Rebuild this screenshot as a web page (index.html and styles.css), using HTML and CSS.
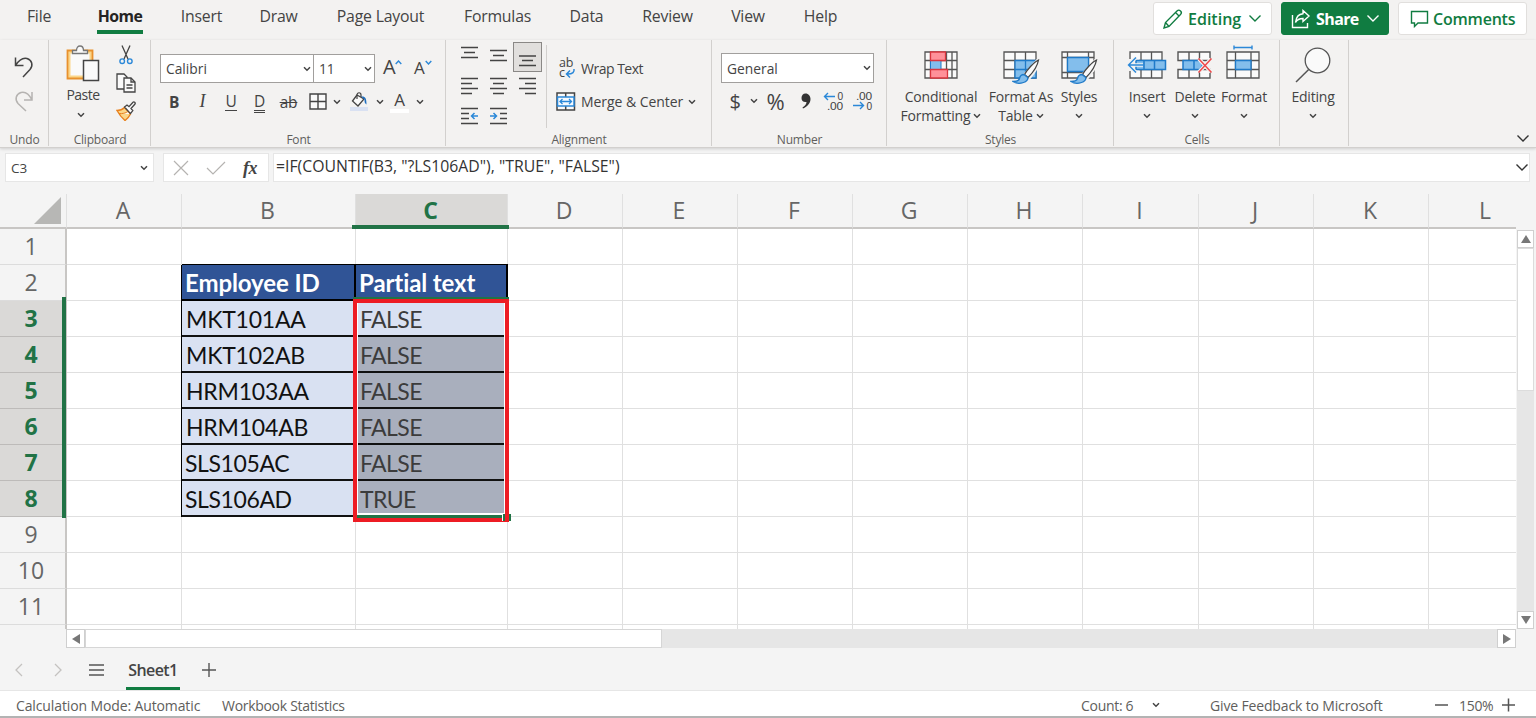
FILE: index.html
```html
<!DOCTYPE html>
<html lang="en">
<head>
<meta charset="utf-8">
<title>Workbook</title>
<link rel="stylesheet" href="styles.css">
</head>
<body>
<svg width="0" height="0" class="defs">
  <defs>
    <symbol id="chev" viewBox="0 0 8 6"><path d="M1 1.2 4 4.2 7 1.2" fill="none" stroke="#444" stroke-width="1.5"/></symbol>
    <symbol id="bigchev" viewBox="0 0 14 9"><path d="M1.5 1.5 7 7l5.500-5.500" fill="none" stroke="currentColor" stroke-width="1.4"/></symbol>
    <symbol id="brush" viewBox="0 0 28 25">
      <path d="M26.500 1 14 15l3.500 3C21 14 25.500 7 26.500 1z" fill="#fff" stroke="#f3f2f1" stroke-width="4"/>
      <path d="M26.500 1C22 3 15 11 12.500 15.500L16 18.500C20 14.500 25.500 7 26.500 1z" fill="#fafafa" stroke="#444" stroke-width="1.3"/>
      <path d="M12 15.500c-3 0-4 1.500-4.500 4C7 21.500 5 22.500 1 22.500c3 2 7.500 2 10.500 1 3-1 4.500-3 4.300-5z" fill="#83beec" stroke="#1f7ac8" stroke-width="1.3"/>
    </symbol>
  </defs>
</svg>
<div class="app">
  <header class="topbar">
    <nav class="tabs">
      <span class="tab w-file">File</span><span class="tab w-home active">Home</span><span class="tab w-insert">Insert</span><span class="tab w-draw">Draw</span><span class="tab w-layout">Page Layout</span><span class="tab w-formulas">Formulas</span><span class="tab w-data">Data</span><span class="tab w-review">Review</span><span class="tab w-view">View</span><span class="tab w-help">Help</span>
    </nav>
    <div class="actions">
      <div class="action a-edit">
        <svg width="20" height="20" viewBox="0 0 20 20" fill="none" stroke="#107c41" stroke-width="1.400"><path d="M1 19 2.500 13.500 14 2c1-1 2.500-1 3.500 0s1 2.500 0 3.500L6 17.500z M12.500 3.500l4 4 M2.500 13.500 6 17.500"/></svg>
        <span>Editing</span><svg width="14" height="9"><use href="#bigchev"/></svg>
      </div>
      <div class="action a-share">
        <svg width="20" height="20" viewBox="0 0 20 20" fill="none" stroke="#fff" stroke-width="1.400"><path d="M1.500 6v12.500h15V14M12 1.500l6 5.500-6 5.500V9.500C8.500 9.500 6 10.500 4.500 13.500 5 8.500 7.500 5 12 4.700z"/></svg>
        <span>Share</span><svg width="14" height="9"><use href="#bigchev"/></svg>
      </div>
      <div class="action a-comments">
        <svg width="19" height="18" viewBox="0 0 19 18" fill="none" stroke="#107c41" stroke-width="1.400"><path d="M1.500 1.500h16v11.500H8L4.500 16.500V13h-3z"/></svg>
        <span>Comments</span>
      </div>
    </div>
  </header>

  <div class="ribbon">
    <section class="group g-undo">
      <div class="content undo-col">
        <svg width="20" height="22" viewBox="0 0 20 22" fill="none" stroke="#444" stroke-width="1.500"><path d="M1.500 1.500v8h8M1.500 9.500C5 4 9 1.500 13 2.500c5 1.500 6.500 7 3 11L9 21"/></svg>
        <svg width="20" height="22" viewBox="0 0 20 22" fill="none" stroke="#b5b3b1" stroke-width="1.500"><path d="M18 2v8h-8M18 10C15 4 11 1.500 7 2.500c-5 1.500-6.500 7-3 11L12 21"/></svg>
      </div>
      <div class="label">Undo</div>
    </section>

    <section class="group g-clip">
      <div class="content clip">
        <div class="paste">
          <svg width="34" height="37" viewBox="0 0 34 37"><path d="M1.500 5.500h25v28h-25z" fill="#fbd689" stroke="#e8912d" stroke-width="1.800"/><path d="M4.500 8.500h19v22h-19z" fill="#fafafa"/><path d="M6.500 8.500V5.500h4C10.500 2.500 12 1 14 1s3.500 1.500 3.500 4.500h4v3z" fill="#fafafa" stroke="#777" stroke-width="1.300"/><path d="M17.500 15.500h15v20h-15z" fill="#fafafa" stroke="#444" stroke-width="1.500"/></svg>
          <span>Paste</span>
          <svg class="c" width="8" height="6"><use href="#chev"/></svg>
        </div>
        <div class="clip-tools">
          <svg width="14" height="20" viewBox="0 0 14 20" fill="none"><path d="M3 .5 9 14M11 .5 5 14" stroke="#444" stroke-width="1.300"/><circle cx="3.200" cy="16.200" r="2.300" stroke="#2b88d8" stroke-width="1.400"/><circle cx="10.800" cy="16.200" r="2.300" stroke="#2b88d8" stroke-width="1.400"/></svg>
          <svg width="20" height="20" viewBox="0 0 20 20" fill="#fafafa" stroke="#444" stroke-width="1.300"><path d="M1 1h7l3 3v12H1z"/><path d="M8 5h7l4 4v10H8z"/><path d="M15 5v4h4M10.500 12h6M10.500 15h6" fill="none"/></svg>
          <svg width="20" height="20" viewBox="0 0 20 20"><path d="M1 9.500C5 9.500 7 8 8.500 6.500l6 6.500C13 16 11.500 18 9 19.500 6 17 3.500 14 1 9.500z" fill="#fbd689" stroke="#e8801d" stroke-width="1.400"/><path d="M3 12.500c3 .5 7-.5 9-2l2 2.500" fill="#fff" stroke="#e8801d"/><path d="M8.500 6 11 4l2 1.700L17 1.200c1-1 2.800.5 2 1.800L15 7.600l1.800 2-2.300 3z" fill="#fafafa" stroke="#444" stroke-width="1.300"/></svg>
        </div>
      </div>
      <div class="label">Clipboard</div>
    </section>

    <section class="group g-font">
      <div class="content">
        <div class="font-top">
          <div class="select s-font"><span>Calibri</span><svg width="8" height="6"><use href="#chev"/></svg></div>
          <div class="select s-size"><span>11</span><svg width="8" height="6"><use href="#chev"/></svg></div>
          <span class="grow">A<svg width="7" height="5" viewBox="0 0 7 5"><path d="M.7 4 3.500 1 6.300 4" fill="none" stroke="#2b88d8" stroke-width="1.400"/></svg></span>
          <span class="shrink">A<svg width="7" height="5" viewBox="0 0 7 5"><path d="M.7 1 3.500 4 6.300 1" fill="none" stroke="#2b88d8" stroke-width="1.400"/></svg></span>
        </div>
        <div class="font-row">
          <b>B</b><i>I</i><span class="u">U</span><span class="dd">D</span><span class="st">ab</span>
          <svg width="18" height="17" viewBox="0 0 18 17" fill="#fafafa" stroke="#444" stroke-width="1.400"><path d="M1 1h16v15H1zM9 1v15M1 8.500h16"/></svg>
          <svg width="8" height="6"><use href="#chev"/></svg>
          <svg width="20" height="20" viewBox="0 0 20 20"><path d="M1 15h18v4H1z" fill="#d9e1f2"/><path d="M8 3 3.500 9 9 14l6-7z" fill="#fafafa" stroke="#444" stroke-width="1.300"/><path d="M8 7V3c0-3 4-3 4 0v2" fill="none" stroke="#444" stroke-width="1.200"/><path d="M12 4.500c4-.5 5.500 1 5.500 8-2-1-2-3-2-5z" fill="#1f6fc0"/></svg>
          <svg width="8" height="6"><use href="#chev"/></svg>
          <span class="fc">A</span>
          <svg width="8" height="6"><use href="#chev"/></svg>
        </div>
      </div>
      <div class="label">Font</div>
    </section>

    <section class="group g-align">
      <div class="content align">
        <div class="align-grid">
          <span><svg width="19" height="24" viewBox="0 0 19 24"><path d="M1 2.500h17M4 7.500h11M1 12.500h17"/></svg></span>
          <span><svg width="19" height="24" viewBox="0 0 19 24"><path d="M1 5.500h17M4 10.500h11M1 15.500h17"/></svg></span>
          <span class="on"><svg width="19" height="24" viewBox="0 0 19 24"><path d="M1 11h17M4 15.500h11M1 20.500h17"/></svg></span>
          <span><svg width="19" height="18" viewBox="0 0 19 18"><path d="M1 1.500h17M1 6.500h11M1 11.500h17M1 16.500h11"/></svg></span>
          <span><svg width="19" height="18" viewBox="0 0 19 18"><path d="M1 1.500h17M4 6.500h11M1 11.500h17M4 16.500h11"/></svg></span>
          <span><svg width="19" height="18" viewBox="0 0 19 18"><path d="M1 1.500h17M7 6.500h11M1 11.500h17M7 16.500h11"/></svg></span>
          <span><svg width="19" height="18" viewBox="0 0 19 18"><path d="M1 1.500h17M1 6.500h8M1 11.500h8M1 16.500h17"/><path class="blue" d="M18 9h-6M14.500 6 11.500 9l3 3"/></svg></span>
          <span><svg width="19" height="18" viewBox="0 0 19 18"><path d="M1 1.500h17M11 6.500h7M11 11.500h7M1 16.500h17"/><path class="blue" d="M1 9h6M4.500 6l3 3-3 3"/></svg></span>
        </div>
        <div class="align-text">
          <div class="line"><svg class="open" width="20" height="22" viewBox="0 0 20 22"><text x="3" y="9" class="wrapab">ab</text><text x="3" y="19" class="wrapab">c</text><path d="M18 11c.5 3-1 5-6.500 5M14 12.500 10.500 16l3.500 3.500" fill="none" stroke="#2b88d8" stroke-width="1.500"/></svg><span class="wt">Wrap Text</span></div>
          <div class="line"><svg width="20" height="19" viewBox="0 0 20 19"><path d="M1 1h17.500v17H1zM9.700 1v17" fill="#fafafa" stroke="#444" stroke-width="1.500"/><path d="M1.500 5h16.500v9H1.500z" fill="#f5faff" stroke="#2b88d8" stroke-width="1.500"/><path d="M4 9.500h11.500M6.500 7 4 9.500 6.500 12M13 7l2.500 2.500L13 12" fill="none" stroke="#2b88d8" stroke-width="1.300"/></svg><span class="mc">Merge &amp; Center</span><svg width="8" height="6"><use href="#chev"/></svg></div>
        </div>
      </div>
      <div class="label">Alignment</div>
    </section>

    <section class="group g-num">
      <div class="content">
        <div class="select s-num"><span>General</span><svg width="8" height="6"><use href="#chev"/></svg></div>
        <div class="num-row">
          <span class="cur">$</span><svg width="8" height="6"><use href="#chev"/></svg><span class="pct">%</span>
          <svg width="12" height="18" viewBox="0 0 12 18"><path d="M5.500 1.500C8.500 1.500 10.500 4 10.500 7c0 4-3 7.500-7.500 9.500l-.5-1C5 14 6.500 12 6.500 10 3.500 10.500 1.500 9 1.500 6c0-2.500 1.700-4.500 4-4.500z" fill="#333"/></svg>
          <svg class="open" width="22" height="22" viewBox="0 0 22 22"><text x="15.500" y="10" textLength="5.500" lengthAdjust="spacingAndGlyphs" class="dec">0</text><text x="5" y="19.500" textLength="16" lengthAdjust="spacingAndGlyphs" class="dec">.00</text><path d="M13 6.500H2.500M6 3 2.500 6.500 6 10" fill="none" stroke="#2b88d8" stroke-width="1.400"/></svg>
          <svg class="open" width="22" height="22" viewBox="0 0 22 22"><text x="5" y="10" textLength="16" lengthAdjust="spacingAndGlyphs" class="dec">.00</text><text x="15.500" y="19.500" textLength="5.500" lengthAdjust="spacingAndGlyphs" class="dec">0</text><path d="M2 15.500h10.500M9 12l3.500 3.500L9 19" fill="none" stroke="#2b88d8" stroke-width="1.400"/></svg>
        </div>
      </div>
      <div class="label">Number</div>
    </section>

    <section class="group g-styles">
      <div class="content bigs">
        <div class="big b-cf">
          <svg width="36" height="42" viewBox="0 0 36 42"><path d="M2 8h32v26H2zM2 16.500h32M2 25.500h32M7.500 8v26M29 8v26M23.500 8v26" fill="#fafafa" stroke="#555" stroke-width="1.300"/><path d="M7.500 16.500h10.500v9H7.500z" fill="#83beec" stroke="#1f7ac8"/><path d="M7.500 8h15v8.500h-15zM7.500 25.500h17V34h-17z" fill="#ff9199" stroke="#d9363e" stroke-width="1.300"/></svg>
          <span>Conditional</span><span class="two">Formatting<svg width="8" height="6"><use href="#chev"/></svg></span>
        </div>
        <div class="big b-ft">
          <svg width="40" height="42" viewBox="0 0 40 42"><path d="M3 8h32v26H3zM3 16.500h32M3 25.500h32M14 8v26M24.500 8v26" fill="#fafafa" stroke="#555" stroke-width="1.300"/><path d="M14 16.500h21V34H14zM24.500 16.500V34M14 25.500h21" fill="#83beec" stroke="#1f7ac8" stroke-width="1.300"/><use href="#brush" x="11" y="15" width="28" height="25"/></svg>
          <span>Format As</span><span class="two">Table<svg width="8" height="6"><use href="#chev"/></svg></span>
        </div>
        <div class="big b-st">
          <svg width="40" height="42" viewBox="0 0 40 42"><path d="M3 8h32v26H3zM3 13.500h32M3 28.500h32M8.500 8v26M29.500 8v26" fill="#fafafa" stroke="#555" stroke-width="1.300"/><path d="M8.500 13.500h21v14h-21z" fill="#83beec" stroke="#1f7ac8" stroke-width="1.300"/><use href="#brush" x="11" y="15" width="28" height="25"/></svg>
          <span>Styles</span><svg class="c" width="8" height="6"><use href="#chev"/></svg>
        </div>
      </div>
      <div class="label">Styles</div>
    </section>

    <section class="group g-cells">
      <div class="content bigs">
        <div class="big b-in">
          <svg width="42" height="42" viewBox="0 0 42 42"><path d="M4 8h32v26H4zM4 16.500h32M4 25.500h32M15 8v26M25.500 8v26" fill="#fafafa" stroke="#555" stroke-width="1.300"/><path d="M1 15h12v12H1z" fill="#f3f2f1"/><path d="M10 16.500h29.500v9H10z" fill="#83beec" stroke="#1f7ac8" stroke-width="1.500"/><path d="M18 16.500v9M28.500 16.500v9" stroke="#1f7ac8" stroke-width="1.500"/><path d="M17 21H3M10 13.500 2.500 21l7.500 7.500" fill="none" stroke="#f3f2f1" stroke-width="3.500"/><path d="M18 21H3M10 13.500 2.500 21l7.500 7.500" fill="none" stroke="#2b88d8" stroke-width="1.400"/></svg>
          <span>Insert</span><svg class="c" width="8" height="6"><use href="#chev"/></svg>
        </div>
        <div class="big b-de">
          <svg width="40" height="42" viewBox="0 0 40 42"><path d="M3 8h32v8.500H3zM3 25.500h32V34H3zM14 8v8.500M24.500 8v8.500M14 25.500V34M24.500 25.500V34" fill="#fafafa" stroke="#555" stroke-width="1.400"/><path d="M8 16.500h17l2.500 4.500-2.500 4.500H8zM19 16.500v9" fill="#83beec" stroke="#1f7ac8" stroke-width="1.500"/><path d="M24 15l12 13M36 15 24 28" stroke="#f3f2f1" stroke-width="4"/><path d="M23.500 14.500l13 14M36.500 14.500l-13 14" stroke="#f04a4a" stroke-width="1.500"/></svg>
          <span>Delete</span><svg class="c" width="8" height="6"><use href="#chev"/></svg>
        </div>
        <div class="big b-fo">
          <svg width="40" height="42" viewBox="0 0 40 42"><path d="M3 8h32v26H3zM3 16.500h32M3 25.500h32M11.500 8v26M27 8v26" fill="#fafafa" stroke="#555" stroke-width="1.300"/><path d="M11.500 16.500H27v9H11.500z" fill="#83beec" stroke="#1f7ac8" stroke-width="1.300"/><path d="M10 3.500h18M10 1.500v4M28 1.500v4" stroke="#2b88d8" stroke-width="1.400"/></svg>
          <span>Format</span><svg class="c" width="8" height="6"><use href="#chev"/></svg>
        </div>
      </div>
      <div class="label">Cells</div>
    </section>

    <section class="group g-edit">
      <div class="content bigs">
        <div class="big b-ed">
          <svg width="38" height="42" viewBox="0 0 38 42"><circle cx="23.500" cy="16.500" r="12.300" fill="#fafafa" stroke="#555" stroke-width="1.300"/><path d="M14.700 25.500 2 38" stroke="#555" stroke-width="1.500"/></svg>
          <span>Editing</span><svg class="c" width="8" height="6"><use href="#chev"/></svg>
        </div>
      </div>
    </section>
    <div class="collapse"><svg width="14" height="9"><use href="#bigchev"/></svg></div>
  </div>

  <div class="formula-bar">
    <div class="namebox"><span>C3</span><svg width="8" height="6"><use href="#chev"/></svg></div>
    <div class="fx-tools">
      <svg width="16" height="16" viewBox="0 0 16 16"><path d="M1 1l14 14M15 1 1 15" stroke="#b5b3b1" stroke-width="1.200"/></svg>
      <svg width="20" height="14" viewBox="0 0 20 14"><path d="M1 7l6 6L19 1" fill="none" stroke="#b5b3b1" stroke-width="1.200"/></svg>
      <span class="fx">fx</span>
    </div>
    <div class="formula"><span>=IF(COUNTIF(B3, "?LS106AD"), "TRUE", "FALSE")</span><svg width="14" height="9"><use href="#bigchev"/></svg></div>
  </div>

  <div class="workspace">
    <div class="sheet">
      <div class="row head"><span class="corner"><svg width="27" height="27" viewBox="0 0 27 27"><path d="M27 0v27H0z" fill="#b7b7b5"/></svg></span><span>A</span><span>B</span><span class="sel">C</span><span>D</span><span>E</span><span>F</span><span>G</span><span>H</span><span>I</span><span>J</span><span>K</span><span class="last">L</span></div>
      <div class="row"><span class="rh">1</span><i></i><i></i><i></i><i></i><i></i><i></i><i></i><i></i><i></i><i></i><i></i><i></i></div>
      <div class="row"><span class="rh">2</span><i></i><b class="th t1">Employee ID</b><b class="th t2">Partial text</b><i></i><i></i><i></i><i></i><i></i><i></i><i></i><i></i><i></i></div>
      <div class="row"><span class="rh sel">3</span><i></i><span class="id">MKT101AA</span><span class="val first">FALSE</span><i></i><i></i><i></i><i></i><i></i><i></i><i></i><i></i><i></i></div>
      <div class="row"><span class="rh sel">4</span><i></i><span class="id">MKT102AB</span><span class="val">FALSE</span><i></i><i></i><i></i><i></i><i></i><i></i><i></i><i></i><i></i></div>
      <div class="row"><span class="rh sel">5</span><i></i><span class="id">HRM103AA</span><span class="val">FALSE</span><i></i><i></i><i></i><i></i><i></i><i></i><i></i><i></i><i></i></div>
      <div class="row"><span class="rh sel">6</span><i></i><span class="id">HRM104AB</span><span class="val">FALSE</span><i></i><i></i><i></i><i></i><i></i><i></i><i></i><i></i><i></i></div>
      <div class="row"><span class="rh sel">7</span><i></i><span class="id sls">SLS105AC</span><span class="val">FALSE</span><i></i><i></i><i></i><i></i><i></i><i></i><i></i><i></i><i></i></div>
      <div class="row"><span class="rh sel">8</span><i></i><span class="id sls">SLS106AD</span><span class="val">TRUE</span><i></i><i></i><i></i><i></i><i></i><i></i><i></i><i></i><i></i></div>
      <div class="row"><span class="rh">9</span><i></i><i></i><i></i><i></i><i></i><i></i><i></i><i></i><i></i><i></i><i></i><i></i></div>
      <div class="row"><span class="rh">10</span><i></i><i></i><i></i><i></i><i></i><i></i><i></i><i></i><i></i><i></i><i></i><i></i></div>
      <div class="row"><span class="rh">11</span><i></i><i></i><i></i><i></i><i></i><i></i><i></i><i></i><i></i><i></i><i></i><i></i></div>
      <div class="row stub"><span class="rh"></span><i></i><i></i><i></i><i></i><i></i><i></i><i></i><i></i><i></i><i></i><i></i><i></i></div>
      <div class="colmark"></div>
      <div class="rowmark"></div>
      <div class="selection"></div>
      <div class="callout"></div>
      <div class="handle"></div>
    </div>
    <div class="vscroll">
      <div class="sbtn"><svg width="10" height="8" viewBox="0 0 10 8"><path d="M5 0l5 8H0z" fill="#777"/></svg></div>
      <div class="vthumb"></div>
      <div class="vtrack"></div>
      <div class="sbtn"><svg width="10" height="8" viewBox="0 0 10 8"><path d="M0 0h10L5 8z" fill="#777"/></svg></div>
    </div>
  </div>

  <div class="hscroll">
    <div class="sbtn"><svg width="8" height="10" viewBox="0 0 8 10"><path d="M8 0v10L0 5z" fill="#777"/></svg></div>
    <div class="hthumb"></div>
    <div class="htrack"></div>
    <div class="sbtn"><svg width="8" height="10" viewBox="0 0 8 10"><path d="M0 0l8 5-8 5z" fill="#777"/></svg></div>
  </div>

  <div class="sheetbar">
    <svg width="8" height="14" viewBox="0 0 8 14"><path d="M7 1 1 7l6 6" fill="none" stroke="#c4c2c0" stroke-width="1.300"/></svg>
    <svg width="8" height="14" viewBox="0 0 8 14"><path d="M1 1l6 6-6 6" fill="none" stroke="#c4c2c0" stroke-width="1.300"/></svg>
    <svg class="menu" width="15" height="12" viewBox="0 0 15 12"><path d="M0 1h15M0 6h15M0 11h15" stroke="#555" stroke-width="1.400"/></svg>
    <span class="sheet-tab">Sheet1</span>
    <svg class="add" width="14" height="14" viewBox="0 0 14 14"><path d="M7 0v14M0 7h14" stroke="#555" stroke-width="1.400"/></svg>
  </div>

  <footer class="status">
    <span class="s1">Calculation Mode: Automatic</span>
    <span class="s2">Workbook Statistics</span>
    <span class="s3">Count: 6</span>
    <svg class="s4" width="8" height="6"><use href="#chev"/></svg>
    <span class="s5">Give Feedback to Microsoft</span>
    <svg class="s6" width="13" height="14" viewBox="0 0 13 14"><path d="M0 7h13" stroke="#555" stroke-width="1.500"/></svg>
    <span class="s7">150%</span>
    <svg class="s8" width="13" height="14" viewBox="0 0 13 14"><path d="M0 7h13M6.500 .5v13" stroke="#555" stroke-width="1.500"/></svg>
  </footer>
</div>
</body>
</html>
```

FILE: styles.css
```css
* { box-sizing: border-box; }
body { margin: 0; background: #f4f4f4; font-family: "Open Sans", "Noto Sans", sans-serif; color: #444; overflow: hidden; }
svg { display: block; flex: none; }
svg.open { overflow: visible; }
.defs { position: absolute; }
.app { width: 1536px; height: 718px; display: flex; flex-direction: column; white-space: nowrap; }

/* Tabs */
.topbar { height: 40px; background: #f3f2f1; display: flex; justify-content: space-between; }
.tabs { display: flex; gap: 38px; padding-left: 27px; font-size: 15.8px; line-height: 32px; letter-spacing: -0.2px; }
.tab { height: 34px; display: flex; justify-content: center; }
.w-file { width: 24px; margin-right: 8px; }
.w-home { width: 46px; }
.w-insert { width: 41px; }
.w-draw { width: 37px; }
.w-layout { width: 91px; }
.w-formulas { width: 67px; }
.w-data { width: 35px; }
.w-review { width: 51px; }
.w-view { width: 34px; }
.w-help { width: 35px; }
.tab.active { font-weight: 700; color: #252423; letter-spacing: -0.5px; border-bottom: 4px solid #107c41; }
.actions { display: flex; gap: 9px; padding: 2px 9px 0 0; }
.action { height: 33px; background: #fff; border: 1px solid #e1dfdd; border-radius: 3px; color: #107c41; font-weight: 600; font-size: 16px; display: flex; align-items: center; padding-left: 9px; }
.a-edit { width: 119px; }
.a-edit span { margin: 0 7px 0 5px; }
.a-share { width: 108px; background: #107c41; border-color: #107c41; color: #fff; font-weight: 700; }
.a-share span { margin: 0 7px 0 5px; letter-spacing: -0.6px; }
.a-comments { width: 129px; padding-left: 11px; gap: 4px; letter-spacing: -0.2px; }

/* Ribbon */
.ribbon { height: 108px; background: #f3f2f1; display: flex; border-bottom: 1px solid #d2d0ce; box-shadow: 0 1px 3px rgba(0,0,0,.16); position: relative; z-index: 1; font-size: 14px; letter-spacing: -0.2px; }
.group { height: 106px; border-right: 1px solid #d2d0ce; display: flex; flex-direction: column; }
.content { height: 91px; flex: none; }
.label { font-size: 12px; line-height: 17px; text-align: center; color: #605e5c; padding-left: 1px; }
.g-undo { width: 49px; }
.g-clip { width: 102px; }
.g-font { width: 295px; }
.g-align { width: 266px; }
.g-num { width: 175px; }
.g-styles { width: 227px; }
.g-cells { width: 166px; }
.g-edit { width: 69px; }
.undo-col { padding: 16px 0 0 14px; display: flex; flex-direction: column; gap: 12px; }
.clip { display: flex; padding-left: 17px; gap: 16px; }
.paste { width: 34px; padding-top: 5px; display: flex; flex-direction: column; align-items: center; line-height: 19px; }
.paste span { margin: 3px 0 8px; letter-spacing: -0.5px; }
.paste .c { margin-left: -4px; }
.clip-tools { display: flex; flex-direction: column; align-items: center; gap: 8px; padding-top: 5px; }
.select { height: 29px; background: #fff; border: 1px solid #a19f9d; display: flex; align-items: center; justify-content: space-between; padding: 0 6px 0 5px; font-size: 13.800px; }
.s-font { width: 154px; padding-right: 2px; letter-spacing: 0; }
.s-size { width: 61px; border-left: 0; padding-right: 2px; }
.font-top { display: flex; padding: 14px 0 0 9px; }
.grow { font-size: 20px; line-height: 26px; margin-left: 8px; display: flex; width: 22px; }
.shrink { font-size: 17px; line-height: 28px; margin-left: 9px; display: flex; }
.grow svg, .shrink svg { margin-top: 6px; }
.font-row { display: grid; grid-template-columns: 28px 29px 28px 29px 29px 29px 10px 33px 9px 31px 10px; margin-left: 9px; height: 37px; align-items: center; justify-items: center; font-size: 15.500px; }
.font-row i { font-family: "Liberation Serif", serif; font-size: 18px; }
.u, .dd { line-height: 17px; border-bottom: 1px solid #444; padding: 0; }
.dd { border-bottom: 3px double #444; margin-top: 3px; }
.st { text-decoration: line-through; }
.fc { font-size: 17px; line-height: 18px; border-bottom: 4px solid #fff; padding: 0 4px; }
.align { display: flex; }
.align-grid { display: grid; grid-template-columns: 29px 29px 29px; grid-template-rows: 30px 28px 31px; margin: 2px 0 0 9px; width: 87px; }
.align-grid span { display: flex; align-items: center; justify-content: center; }
.align-grid path { fill: none; stroke: #444; stroke-width: 1.500; }
.align-grid .blue { stroke: #2b88d8; }
.align-grid .on { background: #e1dfdd; border: 1.500px solid #8a8886; }
.align-text { margin: 5px 0 0 4px; height: 83px; border-left: 1px solid #d2d0ce; padding: 7px 0 0 9px; }
.line { height: 33px; display: flex; align-items: center; gap: 5px; }
.wt { letter-spacing: -0.5px; }
.mc { letter-spacing: -0.05px; }
.wrapab { font-size: 12.500px; fill: #444; letter-spacing: -0.2px; }
.g-num .content { padding: 13px 0 0 9px; }
.s-num { width: 153px; padding-right: 2px; height: 30px; letter-spacing: 0; }
.num-row { display: grid; grid-template-columns: 28px 10px 33px 27px 28px 29px; height: 36px; align-items: center; justify-items: center; }
.cur { font-size: 20px; }
.pct { font-size: 22px; }
.dec { font-family: "Liberation Sans", sans-serif; font-size: 11.800px; fill: #444; }
.bigs { display: flex; padding-top: 4px; }
.big { display: flex; flex-direction: column; align-items: center; line-height: 19px; }
.big > svg:first-child { margin-bottom: 1px; }
.big .two { display: flex; align-items: center; gap: 3px; }
.big .c { margin-top: 7px; }
.b-cf { width: 84px; margin-left: 12px; }
.b-ft { width: 66px; margin-left: 5px; }
.b-st { width: 40px; margin-left: 5px; }
.b-in { width: 42px; margin-left: 12px; }
.b-de { width: 44px; margin-left: 5px; }
.b-fo { width: 46px; margin-left: 4px; }
.b-ed { width: 46px; margin-left: 10px; }
.collapse { margin: 94px 0 0 167px; color: #333; }

/* Formula bar */
.formula-bar { height: 46px; background: #f4f4f4; padding: 5px 6px 0 5px; display: flex; font-size: 14px; }
.namebox, .fx-tools, .formula { height: 29px; background: #fff; border: 1px solid #e6e6e6; display: flex; align-items: center; }
.namebox { width: 149px; padding: 0 5px; justify-content: space-between; font-size: 13.500px; margin-right: 9px; }
.fx-tools { width: 106px; padding-left: 9px; margin-right: 4px; }
.fx-tools svg { margin-right: 17px; }
.fx { font-family: "Liberation Serif", serif; font-style: italic; font-weight: 700; font-size: 18px; line-height: 20px; letter-spacing: -0.5px; }
.formula { flex: 1; justify-content: space-between; padding-left: 2px; font-size: 15.800px; color: #333; }
.formula span { padding-bottom: 3px; }

/* Worksheet */
.workspace { height: 435px; display: flex; }
.sheet { width: 1516px; position: relative; overflow: hidden; background: #fff; }
.row { display: grid; grid-template-columns: 67px 115px 174px 152px 115px 115px 115px 115px 115px 116px 115px 115px 115px; height: 36px; width: 1544px; }
.row > * { border-right: 1px solid #e0e0e0; border-bottom: 1px solid #e0e0e0; }
.row .rh { background: #f4f4f4; border-right: 2px solid #c8c6c4; border-bottom: 1px solid #dcdcdc; font-size: 23px; line-height: 35px; color: #666; text-align: center; padding-right: 3px; }
.row .rh.sel { background: #dad9d7; border-bottom-color: #bdbbb9; color: #217346; font-weight: 700; }
.head { height: 35px; }
.head > span { background: #f4f4f4; border-bottom: 2px solid #c8c6c4; text-align: center; font-size: 23px; line-height: 32px; color: #666; padding-right: 2px; }
.head > .sel { background: #dad9d7; color: #217346; font-weight: 700; }
.head .corner { padding: 3px 0 0 34px; }
.row.stub { height: 5px; }
.stub > * { border-bottom: 0; }
.stub .rh { line-height: 5px; border-bottom: 0; }
.th, .id, .val { font-family: Lato, Carlito, sans-serif; font-size: 23px; line-height: 36px; padding-left: 4px; overflow: hidden; }
.row > .th { background: #305496; color: #fff; border: solid #000; border-width: 0 2px 2px 0; box-shadow: 0 -1px 0 #000, -1px 0 0 #000; }
.th { font-weight: 700; font-size: 24px; letter-spacing: -0.1px; padding-left: 3px; }
.row > .id { background: #d9e1f2; color: #111; border: solid #111; border-width: 0 2px 2px 0; box-shadow: -1px 0 0 #000; letter-spacing: -0.2px; }
.row > .id.sls { letter-spacing: -0.4px; padding-left: 3px; }
.row > .val { background: #a9afbd; color: #3c3c3c; border-bottom: 2px solid #111; letter-spacing: -0.6px; }
.row > .val.first { background: #d9e1f2; }
.colmark { position: absolute; left: 352px; top: 31px; width: 157px; height: 4px; background: #217346; }
.rowmark { position: absolute; left: 62px; top: 103px; width: 4px; height: 221px; background: #217346; }
.selection { position: absolute; left: 353px; top: 103px; width: 156px; height: 221px; border: 3px solid #217346; box-shadow: inset 0 0 0 2px #fff; }
.handle { position: absolute; left: 502px; top: 319px; width: 9px; height: 8px; background: #217346; border: solid #fff; border-width: 1px 0 0 1px; clip-path: polygon(0 0, 3px 0, 3px 100%, 0 100%, 0 0, 7px 0, 100% 0, 100% 100%, 7px 100%, 7px 0); }
.callout { position: absolute; left: 353px; top: 105px; width: 156px; height: 223px; border: 4px solid #ed1c24; }
.vscroll { width: 20px; background: #f4f4f4; padding: 36px 2px 0 1px; display: flex; flex-direction: column; }
.sbtn { width: 18px; height: 18px; background: #fff; border: 1px solid #cfcfcf; display: flex; align-items: center; justify-content: center; }
.vscroll .sbtn { width: 17px; }
.vthumb { height: 143px; background: #fff; border: 1px solid #dcdcdc; }
.vtrack { flex: 1; background: #e6e6e6; }
.hscroll { height: 20px; padding: 0 20px 1px 66px; display: flex; }
.hscroll .sbtn { width: 19px; height: 19px; }
.hthumb { width: 577px; background: #fff; border: 1px solid #d6d6d6; }
.htrack { flex: 1; background: #e6e6e6; }

/* Sheet tabs and status */
.sheetbar { height: 42px; border-bottom: 1px solid #e6e6e6; display: flex; align-items: center; padding-left: 15px; }
.sheetbar svg:nth-child(2) { margin-left: 31px; }
.sheetbar .menu { margin-left: 27px; }
.sheet-tab { width: 54px; height: 41px; margin-left: 22px; border-bottom: 3px solid #107c41; font-size: 16px; font-weight: 600; line-height: 42px; letter-spacing: -0.6px; display: flex; justify-content: center; }
.sheetbar .add { margin-left: 22px; }
.status { height: 27px; background: #fff; border-bottom: 2px solid #b3b3b3; display: flex; align-items: center; padding-top: 3px; font-size: 14px; letter-spacing: -0.12px; color: #605e5c; padding-left: 16px; }
.s1 { width: 206px; }
.s2 { width: 859px; letter-spacing: -0.3px; }
.s3 { width: 71px; letter-spacing: -0.3px; }
.s4 { margin-right: 50px; }
.s5 { width: 225px; letter-spacing: -0.15px; }
.s7 { width: 43px; margin-left: 11px; letter-spacing: -0.3px; }
```
